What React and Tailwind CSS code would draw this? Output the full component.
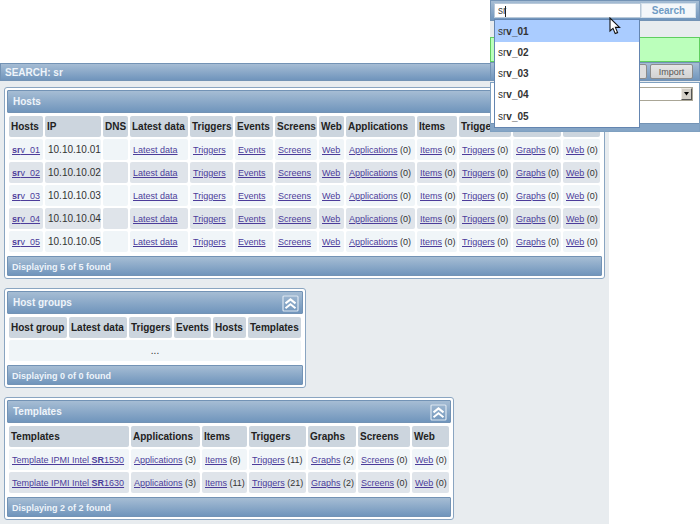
import React from "react";

const BLUE = "border border-[#7393b5] bg-linear-to-b from-[#a6bdd4] to-[#7095bc]";

function CollapseIcon() {
  return (
    <svg viewBox="0 0 17 17" className="block h-[17px] w-[17px]" fill="none" stroke="#ffffff" aria-hidden="true">
      <rect x="1" y="1" width="15" height="15" rx="1" stroke="#dce6f0" strokeWidth="1.2" />
      <path d="M3.5 8.4 8.5 4.4 13.5 8.4M3.5 13.2 8.5 9.2 13.5 13.2" strokeWidth="2" />
    </svg>
  );
}

function Panel({ title, found, widths, heads, children }) {
  return (
    <section className="w-fit rounded-[3px] border border-[#8aa5c1] bg-white p-[2px]">
      <header className={`flex h-[23px] items-center justify-between rounded-[1px] pt-px pr-[3px] pl-[5px] ${BLUE}`}>
        <h2 className="text-[10px] leading-3 font-bold text-[#eef4fa]">{title}</h2>
        <button type="button" aria-label={`Collapse ${title}`}>
          <CollapseIcon />
        </button>
      </header>
      <table className="mt-px w-px table-fixed border-separate border-spacing-[2px]">
        <colgroup>
          {widths.map((w, i) => (
            <col key={i} className={w} />
          ))}
        </colgroup>
        <thead>
          <tr>
            {heads.map((h, i) => (
              <th key={i} className="h-[21px] rounded-[2px] bg-[#ccd5de] pt-px pr-0 pb-0 pl-[2px] text-left text-[10px] leading-3 font-bold whitespace-nowrap text-[#222222]">
                {h}
              </th>
            ))}
          </tr>
        </thead>
        <tbody>{children}</tbody>
      </table>
      <footer className={`mt-[2px] flex h-5 items-center rounded-[1px] pt-px pl-1 text-[9px] leading-3 font-bold text-[#eef4fa] ${BLUE}`}>
        Displaying {found} of {found} found
      </footer>
    </section>
  );
}

function Row({ children }) {
  return <tr className="[&>td]:bg-[#f0f5f8] even:[&>td]:bg-[#dfe4ea]">{children}</tr>;
}

function Cell({ children, size = "text-[9px]" }) {
  return <td className={`h-[21px] rounded-[2px] pt-px pr-0 pb-0 pl-[3px] leading-3 whitespace-nowrap text-[#333333] ${size}`}>{children}</td>;
}

function Link({ children }) {
  return (
    <a href="#" className="text-[#4c3c9a] underline">
      {children}
    </a>
  );
}

const HOST_WIDTHS = ["w-[34px]", "w-[56px]", "w-[25px]", "w-[58px]", "w-[43px]", "w-[38px]", "w-[42px]", "w-[25px]", "w-[69px]", "w-[40px]", "w-[52px]", "w-[48px]", "w-[37px]"];
const HOST_HEADS = ["Hosts", "IP", "DNS", "Latest data", "Triggers", "Events", "Screens", "Web", "Applications", "Items", "Triggers", "Graphs", "Web"];
const GROUP_WIDTHS = ["w-[58px]", "w-[58px]", "w-[43px]", "w-[37px]", "w-[33px]", "w-[53px]"];
const GROUP_HEADS = ["Host group", "Latest data", "Triggers", "Events", "Hosts", "Templates"];
const TEMPLATE_WIDTHS = ["w-[120px]", "w-[69px]", "w-[45px]", "w-[57px]", "w-[48px]", "w-[52px]", "w-[37px]"];
const TEMPLATE_HEADS = ["Templates", "Applications", "Items", "Triggers", "Graphs", "Screens", "Web"];
const NUMBERS = ["01", "02", "03", "04", "05"];
const TEMPLATES = [
  { id: "1530", counts: [3, 8, 11, 2, 0, 0] },
  { id: "1630", counts: [3, 11, 21, 2, 0, 0] },
];

function SearchOverlay() {
  return (
    <div className="absolute top-0 right-0 w-[210px] bg-[#e8ecef]">
      <form className={`flex h-[21px] items-center px-[3px] ${BLUE}`}>
        <input
          type="text"
          aria-label="Search"
          defaultValue="sr"
          className="h-[15px] w-[147px] border border-[#b9c9d9] bg-white px-[3px] text-[10px] leading-3 text-[#444444] outline-none"
        />
        <button type="button" className="h-[15px] flex-1 border border-[#d4e0ea] bg-[#f4f7fa] text-[10px] leading-3 font-bold text-[#6f9bc4]">
          Search
        </button>
      </form>
      <div className="mt-4 h-[25px] border border-[#5fce5f] bg-[#bbffbb]" />
      <div className={`flex h-[19px] items-center justify-end gap-[3px] pr-[6px] ${BLUE}`}>
        <button type="button" aria-label="Create" className="h-[15px] w-10 rounded-[2px] border border-[#8c8c8c] bg-[#dedede]" />
        <button type="button" className="h-[15px] w-[43px] rounded-[2px] border border-[#8c8c8c] bg-linear-to-b from-[#e6e6e6] to-[#d2d2d2] text-[9px] leading-3 text-[#555555]">
          Import
        </button>
      </div>
      <div className="mt-px border border-[#7fa0c0] bg-white">
        <div className="flex h-10 justify-end pt-1 pr-[6px]">
          <div className="relative h-[14px] w-[130px]">
            <select aria-label="Group" className="h-full w-full appearance-none border border-[#aaa696] bg-white" />
            <span className="pointer-events-none absolute top-px right-px flex h-3 w-[11px] items-center justify-center border border-t-[#efebe4] border-r-[#555555] border-b-[#555555] border-l-[#efebe4] bg-[#d4d0c8]">
              <svg viewBox="0 0 7 4" className="h-1 w-[7px]" aria-hidden="true">
                <path d="M1 0H6L3.5 3.5Z" fill="#000000" />
              </svg>
            </span>
          </div>
        </div>
        <div className="h-2 border-t border-[#7393b5] bg-[#85a5c6]" />
      </div>
      <ul className="absolute top-[19px] left-1 w-[146px] border border-[#6485b0] bg-white">
        {NUMBERS.map((n, i) => (
          <li key={n} className={`flex h-[21px] items-center pt-px pl-[3px] text-[10px] leading-3 text-[#333333] first:h-[22px] last:h-[22px] ${i === 0 ? "bg-[#aaccff]" : "bg-white"}`}>
            <span>
              sr<b>v_{n}</b>
            </span>
          </li>
        ))}
      </ul>
      <svg viewBox="0 0 12 18" className="absolute top-[17px] left-[119px] h-[18px] w-3" aria-hidden="true">
        <path d="M1 1V14L4 11.4 6.2 16.6 8.6 15.6 6.4 10.4H10.6Z" fill="#ffffff" stroke="#111111" strokeWidth="1.1" />
      </svg>
      <span className="absolute top-[6px] left-[15px] h-[11px] w-px bg-[#222222]" />
    </div>
  );
}

export default function App() {
  return (
    <div className="relative flex min-h-screen flex-col overflow-hidden bg-white pt-[63px] font-['Liberation_Sans',Arial,sans-serif]">
      <main className="mr-[91px] flex-1 bg-[#e8ecef] pb-1">
        <h1 className={`flex h-[18px] items-center pt-px pl-1 text-[10px] leading-3 font-bold text-[#eef4fa] ${BLUE}`}>SEARCH: sr</h1>
        <div className="flex flex-col gap-[9px] pt-[6px] pl-1">
          <Panel title="Hosts" found={5} widths={HOST_WIDTHS} heads={HOST_HEADS}>
            {NUMBERS.map((n) => (
              <Row key={n}>
                <Cell>
                  <Link>
                    <b>sr</b>v_{n}
                  </Link>
                </Cell>
                <Cell size="text-[10px]">10.10.10.{n}</Cell>
                <Cell />
                {HOST_HEADS.slice(3, 8).map((h) => (
                  <Cell key={h}>
                    <Link>{h}</Link>
                  </Cell>
                ))}
                {HOST_HEADS.slice(8).map((h) => (
                  <Cell key={h}>
                    <Link>{h}</Link> (0)
                  </Cell>
                ))}
              </Row>
            ))}
          </Panel>
          <Panel title="Host groups" found={0} widths={GROUP_WIDTHS} heads={GROUP_HEADS}>
            <tr>
              <td colSpan={6} className="h-[21px] rounded-[2px] bg-[#f0f5f8] p-0 text-center text-[10px] leading-3 text-[#333333]">
                ...
              </td>
            </tr>
          </Panel>
          <Panel title="Templates" found={2} widths={TEMPLATE_WIDTHS} heads={TEMPLATE_HEADS}>
            {TEMPLATES.map((t) => (
              <Row key={t.id}>
                <Cell>
                  <Link>
                    Template IPMI Intel <b>SR</b>
                    {t.id}
                  </Link>
                </Cell>
                {t.counts.map((c, i) => (
                  <Cell key={i}>
                    <Link>{TEMPLATE_HEADS[i + 1]}</Link> ({c})
                  </Cell>
                ))}
              </Row>
            ))}
          </Panel>
        </div>
      </main>
      <SearchOverlay />
    </div>
  );
}
